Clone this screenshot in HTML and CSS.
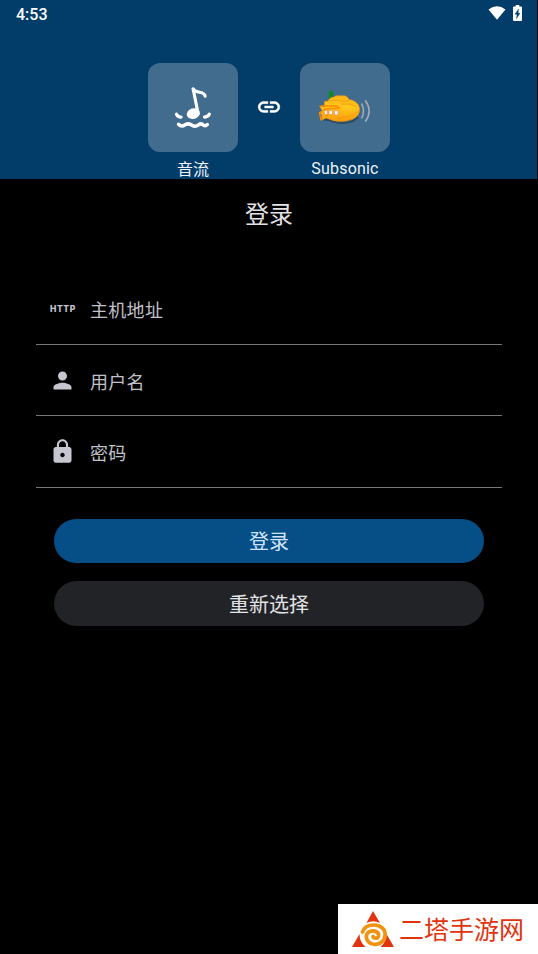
FILE: index.html
```html
<!DOCTYPE html>
<html lang="zh-CN">
<head>
<meta charset="utf-8">
<title>登录</title>
<link rel="stylesheet" href="styles.css">
</head>
<body>
<header class="header">
  <div class="status">
    <span class="clock">4:53</span>
    <div class="status-icons">
      <svg width="18" height="14" viewBox="0 0 18 14"><path d="M.5 3.6Q9-3.2 17.5 3.6L9 13.7Z" fill="#fff"/></svg>
      <svg width="9" height="16" viewBox="0 0 9 16"><path d="M2.700 0h3.600v1.600H8q1 0 1 1V15q0 1-1 1H1q-1 0-1-1V2.600q0-1 1-1h1.700Z" fill="#fff"/><path d="M5.600 4 2 9.300h2.100L3.500 13.500 7 8.200H5Z" fill="#023c69" stroke="#023c69" stroke-width=".4"/></svg>
    </div>
  </div>
  <div class="apps">
    <div class="app">
      <div class="tile">
        <svg class="note" width="56" height="56" viewBox="0 0 56 56" fill="none" stroke="#fff" stroke-linecap="round" stroke-linejoin="round">
          <ellipse cx="28.300" cy="35.600" rx="6.600" ry="5.300" fill="#fff" stroke="none" transform="rotate(-18 28.300 35.600)"/>
          <path d="M33.100 35.500 28.200 11.100" stroke-width="3.100"/>
          <path d="M28.200 11.100C31.500 16 39.500 12.500 40.200 18.300" stroke-width="3.100"/>
          <path d="M11.500 36.200Q13 39.200 16 39.100M39.600 39.100Q43 38.600 44.300 36.200" stroke-width="3.300"/>
          <path d="M13.500 46.300Q16.500 49.500 20 46.800 23.600 44.800 27 47.200 30.200 49.300 33.500 46.900 36.300 44.800 38.300 47.100 40.500 48.500 42.300 46.600" stroke-width="3.500"/>
        </svg>
      </div>
      <div class="app-name cn">音流</div>
    </div>
    <svg class="link" width="26" height="26" viewBox="0 0 24 24"><path d="M3.900 12c0-1.710 1.390-3.100 3.100-3.100h4V7H7c-2.760 0-5 2.240-5 5s2.240 5 5 5h4v-1.900H7c-1.710 0-3.100-1.390-3.100-3.100zM8 13h8v-2H8v2zm9-6h-4v1.900h4c1.710 0 3.100 1.390 3.100 3.100s-1.390 3.100-3.100 3.100h-4V17h4c2.760 0 5-2.240 5-5s-2.240-5-5-5z" fill="#fff" stroke="#fff" stroke-width=".4"/></svg>
    <div class="app">
      <div class="tile">
        <svg width="60" height="50" viewBox="0 0 60 50">
          <defs>
            <linearGradient id="hull" x1="0" y1="0" x2="0" y2="1"><stop offset="0" stop-color="#ffb616"/><stop offset=".45" stop-color="#ffc71b"/><stop offset="1" stop-color="#f99b0b"/></linearGradient>
          </defs>
          <path d="M7 36.500Q13 36 18 38.500 29 41.500 38 38L43 34" fill="none" stroke="#233f50" stroke-width="2" opacity=".7"/>
          <path d="M14 17V8L18 8.500V17Z" fill="#078f16"/>
          <path d="M13 18Q15 14 19 14L21 12.800H30Q33 14 34 16.500 43 18 44.500 25 45.500 32 38 36 29 40 18 37.500L11 35 6 37.500 7 32.500 4.500 29.500 7.500 28 4.500 23 9.500 24V18.500Z" fill="url(#hull)" stroke="#f58d0c" stroke-width=".6"/>
          <path d="M13 18Q21 16 29 18.500L34 17.500M26 21Q35 19.500 42 24M22 35Q35 35 44 28" fill="none" stroke="#ee980f" stroke-width=".8"/>
          <path d="M6 23 22 23 24.500 25 10 26 4.500 30 6 37M10 33.500 13 31.500" fill="none" stroke="#ff8b04" stroke-width="1.300"/>
          <path d="M9.500 27.500h3v4h-3zM14 27.500h3.500v4H14zM19.500 27.500h3.500v4.500h-3.500z" fill="#f3f0fa" stroke="#ed7a35" stroke-width=".5"/>
          <path d="M46.500 20.500Q50.500 28 46.500 35.500M50.300 17.500Q58 28 50.300 38.800" fill="none" stroke="#a1abb2" stroke-width="1.600"/>
        </svg>
      </div>
      <div class="app-name latin">Subsonic</div>
    </div>
  </div>
</header>
<main>
  <h1>登录</h1>
  <form class="form">
    <div class="field"><span class="icon http">HTTP</span><span class="label">主机地址</span></div>
    <div class="field"><span class="icon"><svg width="27" height="27" viewBox="0 0 24 24"><path d="M12 12c2.210 0 4-1.790 4-4s-1.790-4-4-4-4 1.790-4 4 1.790 4 4 4zm0 2c-2.670 0-8 1.340-8 4v2h16v-2c0-2.660-5.330-4-8-4z"/></svg></span><span class="label">用户名</span></div>
    <div class="field"><span class="icon"><svg width="27" height="27" viewBox="0 0 24 24"><path d="M18 8h-1V6c0-2.760-2.240-5-5-5S7 3.240 7 6v2H6c-1.100 0-2 .9-2 2v10c0 1.100.9 2 2 2h12c1.100 0 2-.9 2-2V10c0-1.100-.9-2-2-2zm-6 9c-1.100 0-2-.9-2-2s.9-2 2-2 2 .9 2 2-.9 2-2 2zm3.100-9H8.900V6c0-1.710 1.390-3.100 3.100-3.100s3.100 1.390 3.100 3.100v2z"/></svg></span><span class="label">密码</span></div>
    <div class="actions">
      <button type="button" class="btn primary">登录</button>
      <button type="button" class="btn">重新选择</button>
    </div>
  </form>
</main>
<aside class="watermark">
  <svg width="42" height="38" viewBox="0 0 42 38">
    <path d="M21 1 28 13Q21 9.500 14.500 13ZM7.500 24Q7.500 32 13.500 37H0ZM34.500 24 42 37H28.500Q34.500 32 34.500 24Z" fill="#e2330f"/>
    <path d="M10.500 22C12 17 17 15 22 15 29 15 34 19.500 33 26 32 32.500 26 35.300 20.500 34 13.500 32 12.500 24.500 17.500 21.700 22.500 19.500 27.500 22.500 26.500 26.300 25.500 29 21.500 28.500 21 26.500" fill="none" stroke="#f19210" stroke-width="3.700" stroke-linecap="round"/>
  </svg>
  <span>二塔手游网</span>
</aside>
</body>
</html>
```

FILE: styles.css
```css
* { box-sizing: border-box; }
body {
  margin: 0;
  height: 954px;
  overflow: hidden;
  background: #000;
  font-family: Roboto, "Noto Sans CJK SC", sans-serif;
}
svg { display: block; flex: none; }
.header { width: 537px; height: 179px; background: #023c69; color: #fff; }
.status {
  height: 28px;
  padding: 0 15px 0 16px;
  display: flex;
  align-items: center;
  justify-content: space-between;
}
.clock { font-size: 16px; font-weight: 500; line-height: 28px; padding-top: 1px; }
.status-icons { display: flex; align-items: center; gap: 7px; padding-bottom: 2px; }
.apps { display: flex; justify-content: center; padding: 35px 0 0 1px; }
.app { width: 90px; }
.tile {
  height: 89px;
  border-radius: 12px;
  background: #426c8e;
  display: flex;
  align-items: center;
  justify-content: center;
}
.note { margin-bottom: 4px; }
.link { margin: 31px 18px 0; }
.app-name {
  margin-top: 6px;
  line-height: 22px;
  font-size: 16px;
  text-align: center;
  color: #eef4fa;
}
.latin { letter-spacing: .2px; }
.cn { margin-top: 7px; }
h1 {
  margin: 0;
  height: 94px;
  padding-top: 18px;
  font-size: 24px;
  line-height: 36px;
  font-weight: 400;
  text-align: center;
  color: #e4e2e5;
}
.form { margin: 0 36px; }
.field {
  height: 71.600px;
  border-bottom: 1.500px solid #75777b;
  display: flex;
  align-items: center;
  padding: 4px 0 0 13px;
}
.icon { width: 27px; color: #c5c6d0; fill: #c5c6d0; padding-bottom: 3px; }
.http {
  font: 800 8.500px/12px Inter, sans-serif;
  letter-spacing: .6px;
  padding-left: 1px;
  padding-bottom: 2px;
}
.label { margin-left: 14px; padding-top: 2px; font-size: 18px; line-height: 26px; letter-spacing: .3px; color: #c0c1c9; }
.actions { padding: 31px 18px 0; display: grid; gap: 18px; }
.btn {
  height: 44.500px;
  border: 0;
  border-radius: 23px;
  padding: 2px 0 0;
  background: #222327;
  color: #e4e3e6;
  font: 400 20px/30px Roboto, "Noto Sans CJK SC", sans-serif;
}
.primary { background: #064e86; color: #d1e4ff; }
.watermark {
  position: absolute;
  right: 0;
  bottom: 0;
  width: 200px;
  height: 50px;
  padding-left: 14px;
  display: flex;
  align-items: center;
  gap: 5px;
  background: #fff;
  color: #e2330f;
  font-size: 25px;
  line-height: 36px;
  white-space: nowrap;
}
.watermark span { padding-top: 3px; }
```
